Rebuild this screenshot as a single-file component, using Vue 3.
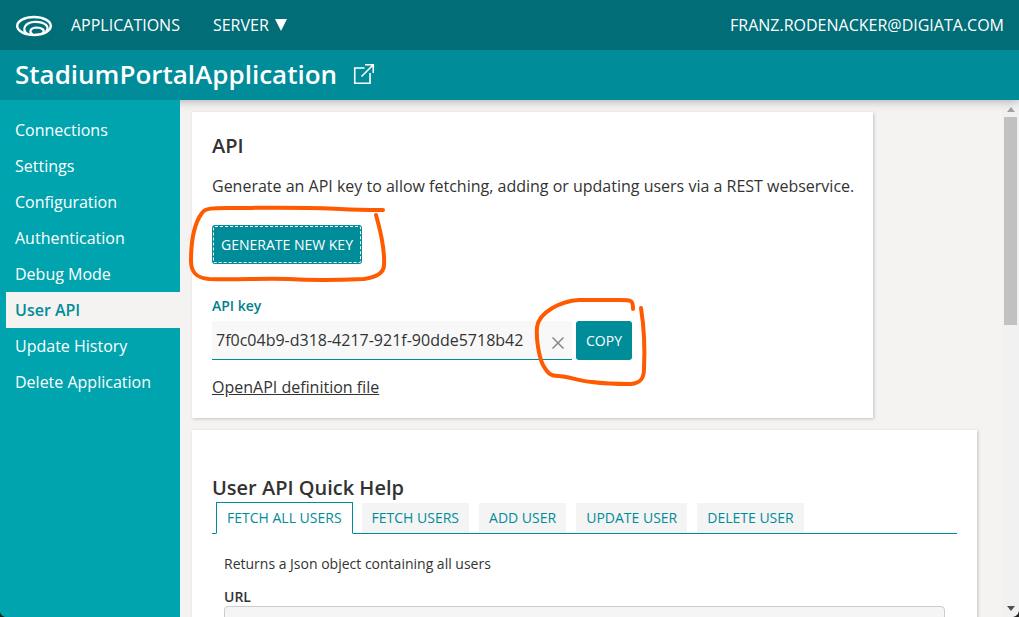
<script setup>
import { ref } from 'vue'

const sections = [
  'Connections',
  'Settings',
  'Configuration',
  'Authentication',
  'Debug Mode',
  'User API',
  'Update History',
  'Delete Application',
]
const activeSection = ref('User API')

const tabs = ['Fetch all users', 'Fetch users', 'Add user', 'Update user', 'Delete user']
const activeTab = ref('Fetch all users')

const apiKey = ref('7f0c04b9-d318-4217-921f-90dde5718b42')
</script>

<template>
  <div class="app">
    <header class="topbar">
      <a class="logo" href="#" aria-label="Home">
        <svg width="38" height="24" viewBox="0 0 38 24" fill="none" stroke="#fff">
          <ellipse cx="19" cy="13" rx="16.800" ry="9" stroke-width="2.400" />
          <path d="M12 20.500C7 17 9 9.200 20 8.800C30 8.600 35.500 14 31 18.500" stroke-width="2.200" />
          <path d="M17.500 21.500C13.500 18.500 15.500 14.800 21.500 14.500C27.500 14.500 30.500 17.500 27.500 20.500" stroke-width="2.200" />
        </svg>
      </a>
      <nav class="topnav">
        <a href="#">APPLICATIONS</a>
        <a href="#" class="server">SERVER
          <svg width="12" height="12" viewBox="0 0 12 12"><path d="M0 0H12L6 12Z" fill="#fff" /></svg>
        </a>
      </nav>
      <a class="account" href="#">FRANZ.RODENACKER@DIGIATA.COM</a>
    </header>

    <div class="titlebar">
      <h1>StadiumPortalApplication</h1>
      <a href="#" class="open" aria-label="Open application">
        <svg width="22" height="22" viewBox="0 0 22 22" fill="none" stroke="#fff" stroke-width="1.600">
          <path d="M11.500 5H1.750V20.250H17V10M12 1.750H20.250V10M20 2L8.500 13.500" />
        </svg>
      </a>
    </div>

    <div class="body">
      <nav class="sidebar">
        <a
          v-for="item in sections"
          :key="item"
          href="#"
          :class="{ active: item === activeSection }"
          @click.prevent="activeSection = item"
        >{{ item }}</a>
      </nav>

      <main class="content">
        <section class="card key-card">
          <h2>API</h2>
          <p class="intro">Generate an API key to allow fetching, adding or updating users via a REST webservice.</p>
          <div class="marked generate-wrap">
            <button type="button" class="btn generate">GENERATE NEW KEY</button>
            <svg class="mark mark-generate" width="200" height="80" viewBox="0 0 200 80">
              <path d="M195 5C180 5 170 5 152 4C120 2 70 3 40 3C25 3 17 3 14 8C5 20 3 40 3 56C3 68 9 73 21 74C50 75 75 73 100 74C130 76 155 75 176 74C190 72 196 67 196 60C197 44 192 24 188 10" />
            </svg>
          </div>
          <label for="api-key">API key</label>
          <div class="key-row">
            <div class="field">
              <input id="api-key" v-model="apiKey" type="text" />
              <button type="button" class="clear" aria-label="Clear" @click="apiKey = ''">
                <svg width="12" height="12" viewBox="0 0 12 12" stroke="#888" stroke-width="1.500">
                  <path d="M0.500 0.500L11.500 11.500M11.500 0.500L0.500 11.500" />
                </svg>
              </button>
            </div>
            <div class="marked">
              <button type="button" class="btn copy">COPY</button>
              <svg class="mark mark-copy" width="114" height="90" viewBox="0 0 114 90">
                <path d="M99 12C99 3 98 3 85 3H45C27 4 5 15 3 30C2 42 5 60 9 68C14 77 17 79 24 79C35 79 43 84 58 85C73 87 85 87 97 87C107 86 110 81 110 72C111 52 110 30 107 11" />
              </svg>
            </div>
          </div>
          <a class="definition" href="#">OpenAPI definition file</a>
        </section>

        <section class="card help-card">
          <h2>User API Quick Help</h2>
          <div class="tabs" role="tablist">
            <button
              v-for="tab in tabs"
              :key="tab"
              type="button"
              role="tab"
              :aria-selected="tab === activeTab"
              :class="{ active: tab === activeTab }"
              @click="activeTab = tab"
            >{{ tab }}</button>
          </div>
          <div class="panel" role="tabpanel">
            <p>Returns a Json object containing all users</p>
            <h3>URL</h3>
            <div class="code"></div>
          </div>
        </section>
      </main>

      <div class="scrollbar" aria-hidden="true">
        <svg width="8" height="5" viewBox="0 0 8 5"><path d="M0 5L4 0L8 5Z" fill="#a3a3a3" /></svg>
        <div class="track"><div class="thumb"></div></div>
        <svg width="8" height="5" viewBox="0 0 8 5"><path d="M0 0H8L4 5Z" fill="#505050" /></svg>
      </div>
    </div>
    <svg class="corner" width="6" height="6" viewBox="0 0 6 6"><path d="M6 0V6H0Q5 5 6 0Z" fill="#222" /></svg>
    <svg class="corner corner-left" width="5" height="5" viewBox="0 0 5 5"><path d="M0 0V5H5Q1 4 0 0Z" fill="#222" /></svg>
  </div>
</template>

<style>
body {
  margin: 0;
}
</style>

<style scoped>
.app {
  position: relative;
  display: flex;
  flex-direction: column;
  height: 100vh;
  overflow: hidden;
  background: #f4f3f2;
  color: #333;
  font-family: "Open Sans", "Noto Sans", sans-serif;
  font-size: 16px;
  line-height: 24px;
}
h1,
h2,
h3,
p {
  margin: 0;
}
a {
  color: inherit;
  text-decoration: none;
}
button,
input {
  font: inherit;
}
svg {
  display: block;
}
.topbar {
  position: relative;
  z-index: 2;
  display: flex;
  flex: none;
  align-items: center;
  height: 50px;
  padding: 0 15px;
  background: #006d77;
  color: #fff;
}
.topnav {
  display: flex;
  gap: 33px;
  margin-left: 18px;
}
.server {
  display: flex;
  align-items: center;
  gap: 6px;
}
.account {
  margin-left: auto;
}
.titlebar {
  position: relative;
  z-index: 1;
  display: flex;
  flex: none;
  align-items: center;
  gap: 16px;
  box-sizing: border-box;
  height: 50px;
  padding: 0 15px 2px;
  background: #008c99;
  color: #fff;
  box-shadow: 0 0 10px rgba(0, 0, 0, 0.35);
}
h1 {
  font-size: 26px;
  font-weight: 600;
  line-height: 36px;
}
.body {
  display: flex;
  flex: 1;
  min-height: 0;
}
.sidebar {
  position: relative;
  z-index: 1;
  flex: none;
  box-sizing: border-box;
  width: 180px;
  padding: 12px 0 0 6px;
  background: #00a4ae;
  color: #fff;
}
.sidebar a {
  display: block;
  padding: 6px 9px;
}
.sidebar a.active {
  background: #f4f3f2;
  color: #008c99;
  font-weight: 600;
}
.content {
  flex: 1;
  min-width: 0;
  padding: 12px 25px 0 12px;
  overflow: hidden;
}
.card {
  box-sizing: border-box;
  padding: 20px;
  background: #fff;
  box-shadow: 1px 1px 3px rgba(0, 0, 0, 0.2);
}
h2 {
  font-size: 20px;
  font-weight: 600;
  line-height: 28px;
}
.key-card {
  width: fit-content;
  margin-bottom: 12px;
  padding: 20px 19px 19px 20px;
}
.intro {
  margin-top: 14px;
}
.marked {
  position: relative;
  width: fit-content;
}
.generate-wrap {
  margin: 27px 0 30px;
}
.btn {
  display: block;
  box-sizing: border-box;
  height: 39px;
  padding: 0 10px;
  border: 0;
  border-radius: 3px;
  background: #008c99;
  color: #fff;
  font-size: 14px;
}
.generate {
  padding: 0 9px;
  outline: 1px dashed #fff;
  outline-offset: -2px;
}
.mark {
  position: absolute;
  fill: none;
  stroke: #ff5a00;
  stroke-width: 4;
  stroke-linecap: round;
  stroke-linejoin: round;
  pointer-events: none;
}
.mark-generate {
  left: -24px;
  top: -20px;
}
.mark-copy {
  left: -42px;
  top: -24px;
}
label {
  display: block;
  color: #007f8b;
  font-size: 14px;
  font-weight: 600;
}
.key-row {
  display: flex;
  align-items: center;
  gap: 4px;
  margin-top: 3px;
}
.field {
  display: flex;
  box-sizing: border-box;
  width: 360px;
  height: 39px;
  border-bottom: 1px solid #008c99;
  background: #f8f8f8;
}
.field input {
  flex: 1;
  min-width: 0;
  padding: 0 4px;
  border: 0;
  outline: 0;
  background: transparent;
  color: #333;
}
.clear {
  padding: 6px 8px 0;
  border: 0;
  background: transparent;
}
.definition {
  display: block;
  width: fit-content;
  margin-top: 15px;
  text-decoration: underline;
}
.help-card {
  min-height: 300px;
  padding-top: 44px;
}
.tabs {
  display: flex;
  gap: 8px;
  padding-left: 4px;
  border-bottom: 1px solid #008c99;
}
.tabs button {
  box-sizing: border-box;
  height: 32px;
  margin-bottom: -1px;
  padding: 0 10px;
  border: 1px solid transparent;
  border-bottom-color: #008c99;
  background: #f4f4f4;
  background-clip: padding-box;
  color: #008c99;
  font-size: 14px;
  text-transform: uppercase;
}
.tabs button.active {
  border-color: #008c99;
  border-bottom-color: #fff;
  background: #fff;
}
.panel {
  padding: 18px 12px 0;
  font-size: 14px;
}
h3 {
  margin-top: 9px;
  font-size: 14px;
  font-weight: 600;
}
.code {
  height: 60px;
  margin-top: -3px;
  border: 1px solid #ccc;
  border-radius: 4px;
  background: #f5f5f5;
}
.scrollbar {
  display: flex;
  flex: none;
  flex-direction: column;
  align-items: center;
  box-sizing: border-box;
  width: 17px;
  padding: 7px 0 6px;
  background: #f1f1f1;
}
.track {
  flex: 1;
  width: 13px;
  padding: 5px 0;
}
.thumb {
  height: 43%;
  background: #c1c1c1;
}
.corner {
  position: absolute;
  z-index: 2;
  right: 0;
  bottom: 0;
}
.corner-left {
  right: auto;
  left: 0;
}
</style>
